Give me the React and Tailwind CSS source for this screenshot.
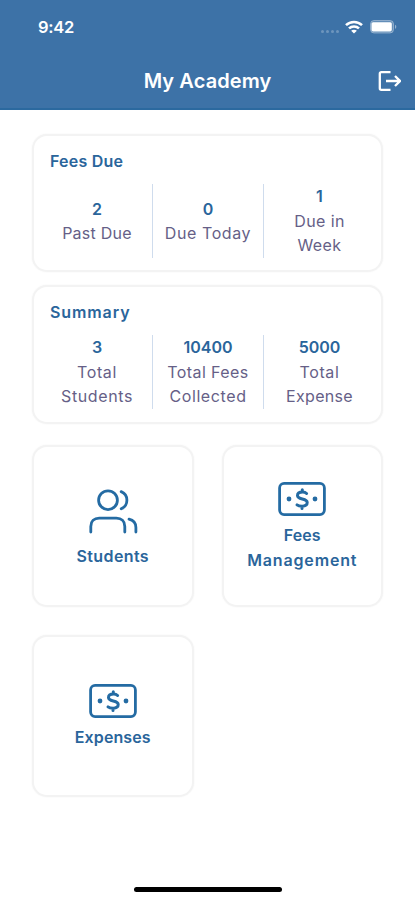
import React from "react";

const feesDue = [
  { value: "2", lines: ["Past Due"], tracking: ["tracking-[0.25px]"] },
  { value: "0", lines: ["Due Today"], tracking: ["tracking-[0.6px]"] },
  { value: "1", lines: ["Due in", "Week"], tracking: ["tracking-[0.4px]", "tracking-[0.4px]"] },
];

const summary = [
  { value: "3", lines: ["Total", "Students"], tracking: ["tracking-[0.6px]", "tracking-[0.6px]"] },
  { value: "10400", lines: ["Total Fees", "Collected"], tracking: ["tracking-[0.4px]", "tracking-[0.6px]"] },
  { value: "5000", lines: ["Total", "Expense"], tracking: ["tracking-[0.6px]", "tracking-[0.3px]"] },
];

function StatusBar() {
  return (
    <div className="flex h-[54px] items-center justify-between pl-[38px] pr-[18px]">
      <span className="text-[16.5px] font-semibold leading-none tracking-[-0.3px]">9:42</span>
      <div className="flex items-center">
        <div className="mr-[6px] mt-[8px] flex gap-[2px]">
          <i className="h-[3px] w-[3px] rounded-full bg-white/25" />
          <i className="h-[3px] w-[3px] rounded-full bg-white/25" />
          <i className="h-[3px] w-[3px] rounded-full bg-white/25" />
          <i className="h-[3px] w-[3px] rounded-full bg-white/25" />
        </div>
        <svg width="18" height="14" viewBox="0 0 18 14" fill="none" stroke="currentColor" strokeWidth="2.6">
          <path d="M1 5.1C5.4.9 12.6.9 17 5.1" />
          <path d="M4 8.4c2.8-2.6 7.2-2.6 10 0" />
          <path d="M9 13.6 6.1 10.8c1.6-1.5 4.2-1.5 5.8 0z" fill="currentColor" stroke="none" />
        </svg>
        <svg className="ml-[7px]" width="27" height="14" viewBox="0 0 27 14">
          <rect x=".5" y=".5" width="23" height="12.5" rx="3.5" fill="#fff" fillOpacity=".2" stroke="#fff" strokeOpacity=".35" />
          <rect x="1.5" y="2.2" width="20.3" height="9.2" rx="1.6" fill="#fff" />
          <path d="M25 4.8c1.8.7 1.8 3.4 0 4.2z" fill="#fff" fillOpacity=".45" />
        </svg>
      </div>
    </div>
  );
}

function Header() {
  return (
    <header className="h-[110px] border-b-2 border-[#2b699f] bg-[#3d72a7] text-white">
      <StatusBar />
      <div className="grid h-[54px] grid-cols-[40px_1fr_40px] items-center">
        <h1 className="col-start-2 text-center text-[20px] font-semibold leading-none tracking-[0.1px]">My Academy</h1>
        <svg width="24" height="22" viewBox="0 0 24 22" className="mb-px ml-[2px]" fill="none" stroke="currentColor" strokeWidth="2.3">
          <path d="M13.5 2.2H4.3a1.5 1.5 0 0 0-1.5 1.5v14.6a1.5 1.5 0 0 0 1.5 1.5h9.2" />
          <path d="M9 11H22.5M18 6l5 5-5 5" />
        </svg>
      </div>
    </header>
  );
}

function StatCard({ title, items, className, titleClass }) {
  return (
    <section className={`rounded-[15px] border-2 border-[#f3f3f3] bg-white pl-[8px] pr-[6px] pt-[13px] shadow-[0_0_2px_#f3f3f3] ${className}`}>
      <h2 className={`pl-[8px] text-[16px] font-semibold leading-[25px] ${titleClass}`}>{title}</h2>
      <div className="mt-[10px] grid h-[74px] grid-cols-3 divide-x divide-[#cfdced]">
        {items.map((item) => (
          <div key={item.value} className="flex flex-col items-center justify-center whitespace-nowrap text-[16px] leading-[24.5px]">
            <span className="font-semibold">{item.value}</span>
            {item.lines.map((line, i) => (
              <span key={line} className={`text-[#665f87] ${item.tracking[i]}`}>{line}</span>
            ))}
          </div>
        ))}
      </div>
    </section>
  );
}

function UsersIcon() {
  return (
    <svg width="50" height="60" viewBox="0 0 50 60" fill="none" stroke="#246ba3" strokeWidth="2.8" strokeLinecap="round">
      <circle cx="20" cy="16.2" r="9.4" />
      <path d="M33.2 7.6c7.6 3.2 7.6 13.8 0 17.2" />
      <path d="M2.8 48v-5.6c0-5.2 3.4-8.2 8.4-8.2h17.2c5 0 8.4 3 8.4 8.2V48" />
      <path d="M41 35.2c4.4 1 6.9 4.2 6.9 8.4V48" />
    </svg>
  );
}

function MoneyIcon() {
  return (
    <svg width="50" height="43" viewBox="0 0 50 43" fill="none" stroke="#246ba3" strokeWidth="2.8" strokeLinecap="round">
      <rect x="2.6" y="3.4" width="44.8" height="31.2" rx="4.5" />
      <circle cx="12" cy="19" r="2.4" fill="#246ba3" stroke="none" />
      <circle cx="38" cy="19" r="2.4" fill="#246ba3" stroke="none" />
      <path strokeWidth="3" d="M29.6 13.5c-1-1-2.4-1.4-4.1-1.4-3 0-5 1.2-5 3.4 0 4.8 9.7 2.2 9.7 7.1 0 2.4-2.2 3.6-5 3.6-2.2 0-3.9-.2-5.2-1.3M25.3 9.8v2.3M25 26.2v2.3" />
    </svg>
  );
}

function Tile({ icon, children }) {
  return (
    <div className="flex h-[162px] flex-col items-center justify-center rounded-[15px] border-2 border-[#f3f3f3] bg-white text-center text-[16px] font-semibold leading-[24.5px] shadow-[0_0_2px_#f3f3f3]">
      {icon}
      {children}
    </div>
  );
}

export default function App() {
  return (
    <div className="flex h-[900px] w-[415px] flex-col overflow-hidden bg-white font-['Inter',sans-serif] text-[#2a659b]">
      <Header />
      <main className="flex-1 px-[32px] pt-[24px]">
        <StatCard title="Fees Due" items={feesDue} className="h-[138px]" titleClass="tracking-[0.2px]" />
        <StatCard title="Summary" items={summary} className="mt-[13px] h-[139px]" titleClass="tracking-[0.9px]" />
        <div className="mt-[21px] grid grid-cols-2 gap-x-[28px] gap-y-[28px]">
          <Tile icon={<UsersIcon />}>
            <span className="tracking-[0.4px]">Students</span>
          </Tile>
          <Tile icon={<MoneyIcon />}>
            <span className="tracking-[0.1px]">Fees</span>
            <span className="tracking-[0.85px]">Management</span>
          </Tile>
          <Tile icon={<MoneyIcon />}>
            <span className="tracking-[0.1px]">Expenses</span>
          </Tile>
        </div>
      </main>
      <div className="mb-[8px] h-[5px] w-[148px] self-center rounded-full bg-black" />
    </div>
  );
}
